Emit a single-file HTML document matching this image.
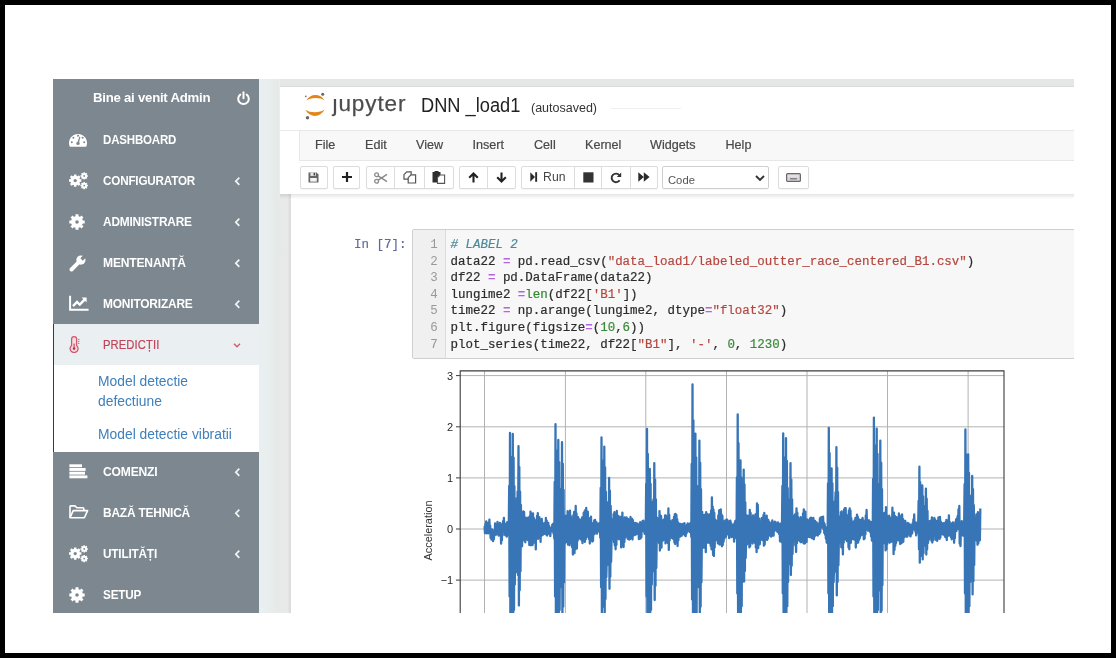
<!DOCTYPE html>
<html>
<head>
<meta charset="utf-8">
<title>Jupyter</title>
<style>
*{box-sizing:border-box;margin:0;padding:0}
html,body{width:1116px;height:658px;overflow:hidden;background:#000}
body{font-family:"Liberation Sans",sans-serif;position:relative}
.abs{position:absolute}
#paper{position:absolute;left:5px;top:5px;width:1106px;height:648px;background:#fff}
#shot{position:absolute;left:53px;top:79px;width:1021px;height:534px;background:#e9edec;overflow:hidden;filter:blur(0.35px)}
/* sidebar */
#side{position:absolute;left:0;top:0;width:206px;height:534px;background:#7c878f}
.mi{position:absolute;left:0;width:206px;height:41px;color:#fff;font-weight:bold;font-size:12.6px;letter-spacing:-0.2px}
.mi .t{position:absolute;left:49.9px;top:1px;transform-origin:0 50%;line-height:41px;white-space:nowrap}
.mi svg.ic{position:absolute}
.mi .chev{position:absolute;left:181px;top:15.5px}
#pred{position:absolute;left:0;top:245px;width:206px;height:41px;background:#eaeff1;color:#c0394f}
#sub{position:absolute;left:0;top:286px;width:206px;height:87px;background:#fff;color:#3f7fba;font-size:13.85px}
#sub div{position:absolute;left:45px;white-space:nowrap}
#edge{position:absolute;left:0;top:245px;width:1px;height:128px;background:#3a3a3a}
/* jupyter */
#strip{position:absolute;left:226px;top:115px;width:12px;height:419px;background:linear-gradient(90deg,#e7eae9,#e8e9e9 70%,#dedede 88%,#dcdcdc);}
#gap{position:absolute;left:206px;top:0;width:20px;height:534px;background:linear-gradient(90deg,#eaeff1,#e8edee 45%,#e5eae8)}
#nb{position:absolute;left:238px;top:115px;width:783px;height:419px;background:#fff}
#hdr{position:absolute;left:227px;top:7px;width:794px;height:108.3px;background:#fff}
#band{position:absolute;left:227px;top:0;width:794px;height:8px;background:#e5e7e6;border-bottom:1.3px solid #dadcdb;z-index:3}
#shadow{position:absolute;left:227px;top:115.3px;width:794px;height:5px;background:linear-gradient(rgba(0,0,0,0.10),rgba(0,0,0,0))}
#menubar{position:absolute;left:19px;top:44px;width:775px;height:31px;background:#f8f8f8;border:1px solid #e7e7e7;border-right:none}
.menu{position:absolute;top:0;line-height:28px;font-size:12.6px;color:#484848;-webkit-text-stroke:0.2px #484848}
.btn{position:absolute;top:79.5px;height:23px;background:#fff;border:1px solid #dcdcdc;border-radius:2px;box-shadow:0 1px 1px rgba(0,0,0,0.04)}
.btn i{position:absolute;top:0;width:1px;height:100%;background:#dcdcdc}
.btn svg{position:absolute}
/* cell */
#prompt{position:absolute;font-family:"Liberation Mono",monospace;font-size:12.47px;color:#5c6aa0;white-space:pre;-webkit-text-stroke:0.15px #5c6aa0}
#cell{position:absolute;left:359px;top:150px;width:663px;height:130px;background:#f7f7f7;border:1px solid #cfcfcf;border-radius:2px}
#gut{position:absolute;left:0;top:0;width:33px;height:128px;background:#f0f0f0;border-right:1px solid #dcdcdc}
.ln{position:absolute;left:0;width:24.8px;text-align:right;font-family:"Liberation Mono",monospace;font-size:12.47px;color:#999;line-height:16.63px}
.cl{position:absolute;left:37.5px;font-family:"Liberation Mono",monospace;font-size:12.47px;color:#2c2c2c;line-height:16.63px;white-space:pre;-webkit-text-stroke:0.2px}
.cm{color:#4b8a99;font-style:italic}
.op{color:#b266dd;font-weight:bold;-webkit-text-stroke:0}
.st{color:#b5473f}
.nu{color:#3a8a3a}
.bi{color:#2e8b2e}
</style>
</head>
<body>
<div id="paper"></div>
<div id="shot">
  <div id="strip"></div>
  <div id="gap"></div>
  <div id="nb"></div>
  <div id="band"></div>
  <div id="shadow"></div>

  <!-- chart -->
  <svg class="abs" style="left:340px;top:285px" width="640" height="249" viewBox="393 364 640 249">
    <g stroke="#b2b2b2" stroke-width="1" fill="none">
      <path d="M484.5 371V613M565.4 371V613M645.8 371V613M726.5 371V613M807 371V613M887.5 371V613M968.1 371V613"/>
      <path d="M460 375.6H1004M460 426.8H1004M460 477.9H1004M460 529H1004M460 580.1H1004"/>
    </g>
    <polyline fill="none" stroke="#3775b7" stroke-width="2.3" stroke-linejoin="round" points="484.6,526.2 485.0,533.2 485.4,524.1 485.8,532.1 486.2,521.4 486.6,533.3 487.0,522.7 487.4,532.2 487.8,523.0 488.2,533.4 488.6,522.9 489.0,529.9 489.4,519.6 489.8,532.5 490.2,525.6 490.6,537.9 491.0,529.3 491.5,539.7 491.9,529.3 492.3,538.8 492.7,532.2 493.1,541.2 493.5,532.2 493.9,539.2 494.3,529.9 494.7,535.3 495.1,523.5 495.5,532.0 495.9,527.0 496.3,534.6 496.7,525.0 497.1,531.6 497.5,521.8 497.9,533.4 498.3,525.6 498.7,535.7 499.1,525.8 499.5,530.7 499.9,522.8 500.3,535.2 500.7,529.6 501.1,543.6 501.5,532.3 501.9,540.4 502.3,523.6 502.7,535.1 503.1,521.1 503.5,526.2 503.9,517.8 504.3,529.3 504.8,523.3 505.2,535.3 505.6,525.5 506.0,532.9 506.4,528.5 506.8,536.7 507.2,522.2 507.6,534.9 508.0,523.6 508.4,532.7 508.8,523.4 509.2,485.8 509.6,596.5 510.0,432.9 510.4,620.0 510.8,456.9 511.2,618.9 511.6,485.8 512.0,486.2 512.4,589.7 512.8,433.9 513.2,620.0 513.6,457.7 514.0,609.9 514.4,486.2 514.8,584.6 515.2,501.2 515.6,562.7 516.0,509.5 516.4,572.0 516.8,498.1 517.2,570.8 517.6,491.7 518.0,575.0 518.5,446.2 518.9,605.6 519.3,466.9 519.7,590.3 520.1,491.7 520.5,571.2 520.9,504.9 521.3,541.8 521.7,518.7 522.1,546.3 522.5,515.6 522.9,539.2 523.3,511.3 523.7,538.9 524.1,512.0 524.5,540.7 524.9,518.3 525.3,542.3 525.7,517.6 526.1,537.5 526.5,518.7 526.9,538.2 527.3,518.1 527.7,540.1 528.1,517.6 528.5,539.8 528.9,520.9 529.3,545.1 529.7,516.4 530.1,542.5 530.5,511.6 530.9,545.3 531.3,513.3 531.8,539.9 532.2,515.1 532.6,545.0 533.0,513.3 533.4,537.5 533.8,518.0 534.2,542.7 534.6,519.7 535.0,538.9 535.4,522.8 535.8,549.4 536.2,521.4 536.6,538.9 537.0,516.0 537.4,534.2 537.8,513.1 538.2,538.8 538.6,521.5 539.0,536.5 539.4,517.2 539.8,537.8 540.2,520.3 540.6,541.9 541.0,519.5 541.4,535.5 541.8,519.0 542.2,535.3 542.6,522.7 543.0,534.6 543.4,523.9 543.8,533.7 544.2,523.6 544.6,533.8 545.1,522.7 545.5,533.0 545.9,518.0 546.3,534.6 546.7,520.6 547.1,535.5 547.5,523.8 547.9,534.2 548.3,522.8 548.7,533.4 549.1,525.9 549.5,531.7 549.9,528.5 550.3,536.2 550.7,529.7 551.1,531.4 551.5,527.4 551.9,529.7 552.3,524.7 552.7,531.5 553.1,523.8 553.5,533.5 553.9,526.5 554.3,538.6 554.7,481.9 555.1,596.5 555.5,424.2 555.9,620.0 556.3,450.4 556.7,618.9 557.1,481.9 557.5,488.9 557.9,589.7 558.3,440.0 558.8,620.0 559.2,462.2 559.6,609.9 560.0,488.9 560.4,584.6 560.8,574.8 561.2,489.9 561.6,587.3 562.0,442.1 562.4,620.0 562.8,463.8 563.2,606.7 563.6,489.9 564.0,582.4 564.4,515.7 564.8,543.4 565.2,520.3 565.6,540.0 566.0,515.8 566.4,542.0 566.8,518.5 567.2,540.0 567.6,511.2 568.0,544.7 568.4,517.4 568.8,543.7 569.2,512.4 569.6,545.3 570.0,510.7 570.4,542.8 570.8,516.1 571.2,537.2 571.6,518.5 572.1,547.3 572.5,522.6 572.9,554.5 573.3,515.2 573.7,548.9 574.1,512.0 574.5,553.2 574.9,517.5 575.3,549.4 575.7,506.0 576.1,546.6 576.5,513.4 576.9,548.5 577.3,519.5 577.7,540.7 578.1,517.2 578.5,538.8 578.9,523.4 579.3,538.6 579.7,519.4 580.1,536.3 580.5,520.7 580.9,539.3 581.3,520.1 581.7,540.4 582.1,517.4 582.5,543.2 582.9,518.5 583.3,539.7 583.7,512.9 584.1,539.2 584.5,511.4 584.9,541.9 585.4,510.0 585.8,539.3 586.2,507.8 586.6,535.6 587.0,516.1 587.4,533.8 587.8,511.6 588.2,537.3 588.6,519.2 589.0,539.1 589.4,522.2 589.8,543.5 590.2,517.8 590.6,538.1 591.0,516.7 591.4,538.5 591.8,523.3 592.2,541.5 592.6,529.1 593.0,541.0 593.4,522.8 593.8,529.6 594.2,520.3 594.6,534.0 595.0,519.9 595.4,532.1 595.8,521.7 596.2,531.4 596.6,522.3 597.0,533.6 597.4,526.9 597.8,531.4 598.2,524.0 598.6,528.9 599.1,523.4 599.5,531.7 599.9,527.2 600.3,537.8 600.7,487.8 601.1,587.3 601.5,437.5 601.9,620.0 602.3,460.4 602.7,606.7 603.1,487.8 603.5,492.0 603.9,581.4 604.3,446.7 604.7,616.4 605.1,467.3 605.5,598.9 605.9,492.0 606.3,577.1 606.7,559.4 607.1,502.4 607.5,560.9 607.9,502.9 608.3,506.0 608.7,564.9 609.1,477.9 609.5,588.8 609.9,490.7 610.3,576.8 610.7,506.0 611.1,561.9 611.5,541.1 611.9,519.1 612.4,539.2 612.8,521.3 613.2,537.3 613.6,514.1 614.0,542.3 614.4,512.1 614.8,545.4 615.2,515.0 615.6,549.3 616.0,514.3 616.4,544.9 616.8,510.9 617.2,536.0 617.6,517.3 618.0,538.3 618.4,515.9 618.8,539.3 619.2,517.1 619.6,537.7 620.0,519.3 620.4,539.3 620.8,516.8 621.2,547.4 621.6,517.8 622.0,545.2 622.4,512.6 622.8,541.8 623.2,519.0 623.6,547.0 624.0,521.0 624.4,542.1 624.8,517.5 625.2,537.8 625.7,520.2 626.1,536.0 626.5,517.5 626.9,536.1 627.3,518.5 627.7,538.8 628.1,518.8 628.5,539.2 628.9,519.7 629.3,539.7 629.7,521.8 630.1,539.0 630.5,516.9 630.9,536.0 631.3,520.7 631.7,537.6 632.1,518.9 632.5,539.5 632.9,520.1 633.3,535.6 633.7,523.0 634.1,532.6 634.5,524.6 634.9,535.0 635.3,522.9 635.7,534.1 636.1,523.2 636.5,534.3 636.9,524.2 637.3,533.4 637.7,523.7 638.1,532.5 638.5,524.8 638.9,539.1 639.4,524.7 639.8,535.3 640.2,522.2 640.6,538.5 641.0,526.6 641.4,537.2 641.8,523.2 642.2,530.9 642.6,521.0 643.0,530.5 643.4,520.7 643.8,531.5 644.2,522.7 644.6,533.8 645.0,526.1 645.4,533.9 645.8,524.3 646.2,483.9 646.6,596.5 647.0,428.8 647.4,620.0 647.8,453.9 648.2,618.9 648.6,483.9 649.0,502.0 649.4,589.7 649.8,468.9 650.2,620.0 650.6,483.9 651.0,609.9 651.4,502.0 651.8,584.6 652.2,504.3 652.7,559.7 653.1,505.1 653.5,499.3 653.9,571.6 654.3,463.1 654.7,600.0 655.1,479.6 655.5,585.8 655.9,499.3 656.3,568.1 656.7,539.3 657.1,517.7 657.5,540.6 657.9,520.7 658.3,541.2 658.7,520.1 659.1,543.2 659.5,511.1 659.9,550.5 660.3,515.5 660.7,539.4 661.1,515.9 661.5,547.7 661.9,521.7 662.3,538.9 662.7,521.1 663.1,540.5 663.5,519.7 663.9,536.6 664.3,522.1 664.7,539.4 665.1,515.3 665.5,543.4 666.0,515.6 666.4,538.9 666.8,519.7 667.2,542.3 667.6,518.0 668.0,543.2 668.4,508.4 668.8,549.9 669.2,514.9 669.6,540.4 670.0,520.7 670.4,538.0 670.8,523.8 671.2,536.6 671.6,521.7 672.0,537.7 672.4,520.2 672.8,538.7 673.2,522.0 673.6,538.1 674.0,516.9 674.4,542.6 674.8,514.2 675.2,544.0 675.6,514.0 676.0,540.5 676.4,514.9 676.8,542.3 677.2,519.2 677.6,546.0 678.0,522.5 678.4,540.2 678.8,523.4 679.2,535.7 679.7,525.2 680.1,536.6 680.5,524.0 680.9,535.0 681.3,525.4 681.7,535.8 682.1,524.1 682.5,534.1 682.9,523.9 683.3,534.0 683.7,524.6 684.1,533.6 684.5,523.2 684.9,535.5 685.3,529.1 685.7,536.1 686.1,528.3 686.5,533.5 686.9,525.0 687.3,531.6 687.7,523.3 688.1,528.9 688.5,524.0 688.9,530.7 689.3,525.0 689.7,532.0 690.1,523.4 690.5,530.3 690.9,525.5 691.3,537.0 691.7,463.9 692.1,599.5 692.5,384.4 693.0,620.0 693.4,420.5 693.8,620.0 694.2,463.9 694.6,486.0 695.0,592.5 695.4,433.6 695.8,620.0 696.2,457.4 696.6,613.6 697.0,486.0 697.4,587.2 697.8,576.0 698.2,487.2 698.6,489.2 699.0,587.3 699.4,440.6 699.8,620.0 700.2,462.7 700.6,606.7 701.0,489.2 701.4,582.4 701.8,543.5 702.2,512.0 702.6,541.5 703.0,516.8 703.4,547.5 703.8,515.1 704.2,547.6 704.6,515.4 705.0,545.9 705.4,514.3 705.8,552.2 706.2,512.2 706.7,543.2 707.1,514.2 707.5,542.3 707.9,514.4 708.3,538.6 708.7,518.4 709.1,542.9 709.5,514.5 709.9,541.5 710.3,515.4 710.7,545.9 711.1,510.5 711.5,549.3 711.9,497.3 712.3,544.2 712.7,506.6 713.1,555.1 713.5,509.7 713.9,556.1 714.3,512.9 714.7,547.6 715.1,519.3 715.5,537.8 715.9,520.3 716.3,540.0 716.7,521.7 717.1,538.0 717.5,522.1 717.9,543.4 718.3,515.4 718.7,542.1 719.1,510.3 719.5,544.6 720.0,510.0 720.4,542.0 720.8,509.5 721.2,544.4 721.6,514.4 722.0,546.3 722.4,516.0 722.8,545.1 723.2,522.3 723.6,541.8 724.0,522.9 724.4,538.6 724.8,520.6 725.2,536.6 725.6,523.8 726.0,536.8 726.4,519.6 726.8,534.5 727.2,519.6 727.6,534.3 728.0,522.7 728.4,534.7 728.8,521.8 729.2,538.2 729.6,520.9 730.0,527.5 730.4,520.7 730.8,529.2 731.2,523.2 731.6,537.1 732.0,529.9 732.4,534.7 732.8,524.8 733.3,536.4 733.7,532.3 734.1,541.7 734.5,523.1 734.9,536.3 735.3,520.8 735.7,535.9 736.1,524.9 736.5,538.4 736.9,477.5 737.3,593.4 737.7,414.5 738.1,620.0 738.5,443.2 738.9,614.8 739.3,477.5 739.7,498.1 740.1,586.9 740.5,460.3 740.9,620.0 741.3,477.5 741.7,606.3 742.1,498.1 742.5,582.1 742.9,502.3 743.3,560.6 743.7,469.7 744.1,581.6 744.5,484.5 744.9,571.1 745.3,502.3 745.7,557.9 746.1,540.7 746.5,515.2 747.0,544.4 747.4,517.4 747.8,539.2 748.2,516.0 748.6,540.4 749.0,517.8 749.4,547.4 749.8,509.9 750.2,546.3 750.6,513.0 751.0,539.8 751.4,519.0 751.8,541.0 752.2,518.5 752.6,543.6 753.0,515.3 753.4,538.9 753.8,518.8 754.2,541.0 754.6,518.8 755.0,543.1 755.4,514.3 755.8,547.4 756.2,513.8 756.6,552.2 757.0,503.5 757.4,548.5 757.8,505.0 758.2,548.2 758.6,519.5 759.0,541.7 759.4,518.7 759.8,544.3 760.3,521.9 760.7,538.4 761.1,521.3 761.5,539.5 761.9,517.8 762.3,540.2 762.7,517.9 763.1,536.7 763.5,514.9 763.9,545.7 764.3,513.0 764.7,544.5 765.1,518.3 765.5,539.0 765.9,517.6 766.3,539.6 766.7,515.6 767.1,539.9 767.5,522.3 767.9,538.7 768.3,520.0 768.7,534.0 769.1,521.9 769.5,535.4 769.9,524.7 770.3,535.8 770.7,524.3 771.1,536.6 771.5,522.4 771.9,533.5 772.3,520.5 772.7,535.5 773.1,522.7 773.6,535.6 774.0,522.7 774.4,530.4 774.8,521.6 775.2,527.2 775.6,522.2 776.0,530.5 776.4,523.6 776.8,530.3 777.2,526.2 777.6,532.2 778.0,522.3 778.4,530.8 778.8,523.8 779.2,534.2 779.6,525.5 780.0,541.3 780.4,523.7 780.8,540.9 781.2,531.9 781.6,542.2 782.0,522.2 782.4,486.0 782.8,593.4 783.2,433.4 783.6,620.0 784.0,457.3 784.4,614.8 784.8,486.0 785.2,488.1 785.6,586.9 786.0,438.2 786.4,620.0 786.9,460.9 787.3,606.3 787.7,488.1 788.1,582.1 788.5,501.0 788.9,563.8 789.3,499.6 789.7,499.3 790.1,556.6 790.5,463.1 790.9,575.0 791.3,479.6 791.7,565.8 792.1,499.3 792.5,554.3 792.9,540.4 793.3,518.2 793.7,540.5 794.1,515.8 794.5,538.6 794.9,514.4 795.3,545.4 795.7,518.4 796.1,552.0 796.5,508.3 796.9,543.2 797.3,512.6 797.7,537.5 798.1,517.1 798.5,539.7 798.9,519.2 799.3,540.8 799.7,522.6 800.1,541.6 800.6,517.1 801.0,542.3 801.4,520.9 801.8,541.1 802.2,519.8 802.6,539.0 803.0,513.4 803.4,543.0 803.8,509.4 804.2,543.7 804.6,513.9 805.0,543.3 805.4,511.6 805.8,539.7 806.2,520.3 806.6,541.9 807.0,519.5 807.4,536.7 807.8,521.3 808.2,536.8 808.6,524.2 809.0,536.4 809.4,519.5 809.8,537.1 810.2,518.2 810.6,536.3 811.0,517.7 811.4,537.7 811.8,519.3 812.2,538.4 812.6,518.2 813.0,535.4 813.4,518.0 813.9,539.3 814.3,522.4 814.7,536.5 815.1,521.0 815.5,533.9 815.9,523.9 816.3,534.8 816.7,522.4 817.1,535.3 817.5,524.3 817.9,535.5 818.3,524.4 818.7,534.0 819.1,523.3 819.5,533.8 819.9,518.3 820.3,532.3 820.7,517.3 821.1,524.4 821.5,517.1 821.9,527.3 822.3,520.9 822.7,526.6 823.1,516.7 823.5,529.3 823.9,522.6 824.3,533.0 824.7,524.2 825.1,534.7 825.5,527.1 825.9,538.6 826.3,529.9 826.7,542.6 827.2,528.1 827.6,538.5 828.0,483.5 828.4,593.4 828.8,427.8 829.2,620.0 829.6,453.1 830.0,614.8 830.4,483.5 830.8,501.7 831.2,586.9 831.6,468.3 832.0,620.0 832.4,483.5 832.8,606.3 833.2,501.7 833.6,582.1 834.0,568.9 834.4,503.5 834.8,571.6 835.2,503.8 835.6,492.2 836.0,568.9 836.4,447.2 836.8,595.4 837.2,467.7 837.6,582.1 838.0,492.2 838.4,565.5 838.8,543.4 839.2,518.2 839.6,542.2 840.0,516.3 840.4,539.4 840.9,512.1 841.3,547.3 841.7,511.5 842.1,544.2 842.5,516.7 842.9,554.4 843.3,517.3 843.7,542.7 844.1,509.4 844.5,539.7 844.9,508.1 845.3,535.8 845.7,508.2 846.1,539.4 846.5,514.6 846.9,541.2 847.3,519.8 847.7,541.5 848.1,518.9 848.5,547.5 848.9,510.6 849.3,549.3 849.7,508.5 850.1,541.7 850.5,510.7 850.9,542.8 851.3,518.2 851.7,537.2 852.1,521.3 852.5,539.0 852.9,522.4 853.3,536.7 853.7,521.6 854.2,539.7 854.6,520.4 855.0,539.1 855.4,517.9 855.8,547.5 856.2,519.8 856.6,542.7 857.0,514.6 857.4,542.8 857.8,516.6 858.2,542.5 858.6,519.0 859.0,540.1 859.4,521.6 859.8,538.3 860.2,520.2 860.6,533.6 861.0,523.8 861.4,535.3 861.8,519.5 862.2,532.9 862.6,518.0 863.0,534.0 863.4,520.5 863.8,539.3 864.2,524.7 864.6,538.7 865.0,523.2 865.4,534.6 865.8,515.4 866.2,522.1 866.6,510.0 867.0,526.9 867.5,519.8 867.9,530.7 868.3,522.0 868.7,529.4 869.1,520.4 869.5,531.0 869.9,522.8 870.3,532.4 870.7,521.8 871.1,536.4 871.5,527.7 871.9,540.6 872.3,528.8 872.7,537.8 873.1,478.9 873.5,596.5 873.9,417.6 874.3,620.0 874.7,445.5 875.1,618.9 875.5,478.9 875.9,483.9 876.3,589.7 876.7,428.7 877.1,620.0 877.5,453.8 877.9,609.9 878.3,483.9 878.7,584.6 879.1,574.7 879.5,489.2 879.9,590.3 880.3,440.6 880.7,620.0 881.2,462.7 881.6,610.8 882.0,489.2 882.4,585.2 882.8,519.8 883.2,540.3 883.6,518.8 884.0,540.5 884.4,512.8 884.8,543.5 885.2,517.2 885.6,550.4 886.0,507.1 886.4,549.2 886.8,515.4 887.2,544.3 887.6,517.0 888.0,540.9 888.4,520.6 888.8,538.7 889.2,515.6 889.6,542.8 890.0,518.4 890.4,535.4 890.8,517.9 891.2,541.8 891.6,517.4 892.0,538.0 892.4,507.7 892.8,541.6 893.2,515.8 893.6,554.2 894.0,512.7 894.5,549.9 894.9,516.0 895.3,545.9 895.7,519.8 896.1,542.9 896.5,517.1 896.9,536.9 897.3,518.8 897.7,540.0 898.1,520.4 898.5,540.3 898.9,513.5 899.3,535.7 899.7,516.7 900.1,544.1 900.5,519.3 900.9,543.4 901.3,515.4 901.7,543.1 902.1,514.4 902.5,540.1 902.9,518.8 903.3,541.8 903.7,520.3 904.1,537.4 904.5,522.1 904.9,536.5 905.3,521.0 905.7,534.2 906.1,523.5 906.5,536.6 906.9,525.2 907.3,536.7 907.8,522.9 908.2,533.4 908.6,523.3 909.0,534.3 909.4,524.8 909.8,535.8 910.2,524.6 910.6,536.4 911.0,528.1 911.4,534.3 911.8,526.0 912.2,533.1 912.6,523.3 913.0,529.9 913.4,519.5 913.8,524.6 914.2,514.5 914.6,527.3 915.0,522.4 915.4,531.6 915.8,526.3 916.2,535.4 916.6,522.7 917.0,530.9 917.4,525.8 917.8,532.6 918.2,524.7 918.6,500.9 919.0,549.2 919.4,466.7 919.8,562.7 920.2,482.2 920.6,556.0 921.0,500.9 921.5,509.4 921.9,547.2 922.3,485.4 922.7,559.4 923.1,496.3 923.5,553.3 923.9,509.4 924.3,545.7 924.7,505.8 925.1,510.8 925.5,544.3 925.9,488.6 926.3,554.5 926.7,498.7 927.1,549.4 927.5,510.8 927.9,543.1 928.3,540.0 928.7,524.0 929.1,539.5 929.5,521.1 929.9,537.1 930.3,523.2 930.7,534.5 931.1,520.5 931.5,540.9 931.9,517.3 932.3,542.5 932.7,519.7 933.1,540.3 933.5,520.9 933.9,536.3 934.3,518.0 934.8,536.0 935.2,519.4 935.6,539.8 936.0,521.5 936.4,535.2 936.8,521.1 937.2,540.9 937.6,522.3 938.0,538.6 938.4,517.4 938.8,536.5 939.2,517.9 939.6,538.9 940.0,516.9 940.4,537.5 940.8,521.6 941.2,533.6 941.6,523.2 942.0,534.1 942.4,523.4 942.8,534.4 943.2,523.2 943.6,533.3 944.0,525.2 944.4,535.5 944.8,523.2 945.2,536.9 945.6,522.2 946.0,537.5 946.4,519.9 946.8,540.1 947.2,520.4 947.6,536.0 948.1,520.4 948.5,535.6 948.9,515.3 949.3,533.9 949.7,521.9 950.1,535.4 950.5,523.8 950.9,537.1 951.3,524.6 951.7,539.3 952.1,523.2 952.5,533.4 952.9,522.4 953.3,538.5 953.7,527.1 954.1,542.8 954.5,526.3 954.9,538.1 955.3,522.2 955.7,530.9 956.1,519.5 956.5,531.0 956.9,518.5 957.3,528.9 957.7,515.9 958.1,528.8 958.5,509.3 958.9,519.6 959.3,506.0 959.7,543.7 960.1,533.1 960.5,546.1 960.9,527.2 961.3,534.7 961.8,521.1 962.2,531.4 962.6,524.3 963.0,535.6 963.4,525.0 963.8,535.0 964.2,521.0 964.6,484.2 965.0,593.4 965.4,429.4 965.8,620.0 966.2,454.3 966.6,614.8 967.0,484.2 967.4,495.4 967.8,586.9 968.2,454.3 968.6,620.0 969.0,472.9 969.4,606.3 969.8,495.4 970.2,582.1 970.6,497.7 971.0,574.0 971.4,505.1 971.8,568.2 972.2,475.9 972.6,594.4 973.0,489.1 973.4,581.3 973.8,505.1 974.2,565.0 974.6,520.1 975.1,537.9 975.5,517.7 975.9,538.3 976.3,514.4 976.7,540.7 977.1,519.7 977.5,544.8 977.9,512.2 978.3,543.4 978.7,517.8 979.1,539.1 979.5,513.8 979.9,540.3 980.3,508.6"/>
    <path d="M460.2 613V370.9H1004V613" fill="none" stroke="#3c3c3c" stroke-width="1.1"/>
    <g stroke="#3c3c3c" stroke-width="1">
      <path d="M456 375.6H460M456 426.8H460M456 477.9H460M456 529H460M456 580.1H460"/>
    </g>
    <g font-family="Liberation Sans, sans-serif" font-size="11" fill="#2a2a2a" text-anchor="end">
      <text x="453.2" y="379.5">3</text>
      <text x="453.2" y="430.7">2</text>
      <text x="453.2" y="481.8">1</text>
      <text x="453.2" y="532.9">0</text>
      <text x="453.2" y="584">−1</text>
    </g>
    <text transform="translate(431.6 530.5) rotate(-90)" font-family="Liberation Sans, sans-serif" font-size="10.4" fill="#333" text-anchor="middle" textLength="60" lengthAdjust="spacingAndGlyphs">Acceleration</text>
  </svg>

  <!-- code cell -->
  <div id="prompt" style="left:301px;top:157.6px;line-height:16.63px">In [7]:</div>
  <div id="cell">
    <div id="gut"></div>
    <div class="ln" style="top:6.90px">1</div>
    <div class="ln" style="top:23.53px">2</div>
    <div class="ln" style="top:40.16px">3</div>
    <div class="ln" style="top:56.79px">4</div>
    <div class="ln" style="top:73.42px">5</div>
    <div class="ln" style="top:90.05px">6</div>
    <div class="ln" style="top:106.68px">7</div>
    <div class="cl" style="top:6.90px"><span class="cm"># LABEL 2</span></div>
    <div class="cl" style="top:23.53px">data22 <span class="op">=</span> pd.read_csv(<span class="st">"data_load1/labeled_outter_race_centered_B1.csv"</span>)</div>
    <div class="cl" style="top:40.16px">df22 <span class="op">=</span> pd.DataFrame(data22)</div>
    <div class="cl" style="top:56.79px">lungime2 <span class="op">=</span><span class="bi">len</span>(df22[<span class="st">'B1'</span>])</div>
    <div class="cl" style="top:73.42px">time22 <span class="op">=</span> np.arange(lungime2, dtype<span class="op">=</span><span class="st">"float32"</span>)</div>
    <div class="cl" style="top:90.05px">plt.figure(figsize<span class="op">=</span>(<span class="nu">10</span>,<span class="nu">6</span>))</div>
    <div class="cl" style="top:106.68px">plot_series(time22, df22[<span class="st">"B1"</span>], <span class="st">'-'</span>, <span class="nu">0</span>, <span class="nu">1230</span>)</div>
  </div>

  <!-- header -->
  <div id="hdr">
    <!-- logo -->
    <svg class="abs" style="left:22px;top:4px" width="30" height="32" viewBox="302 90 30 32">
      <path d="M306.2 100.6C310 93.2 320.6 93.2 324.5 100.4C320 97.2 310.6 97.2 306.2 100.6Z" fill="#e0871c"/>
      <path d="M305.4 109.8C309.6 118 320.4 118 324.5 109.6C320 113.2 310 113.2 305.4 109.8Z" fill="#e0871c"/>
      <circle cx="322.7" cy="94.2" r="1.5" fill="#66666f"/>
      <circle cx="305.8" cy="96.3" r="0.9" fill="#707078"/>
      <circle cx="307.5" cy="117.7" r="1.7" fill="#66666f"/>
    </svg>
    <div class="abs" id="jup" style="left:52.5px;top:4px;font-size:22.5px;line-height:28px;color:#4c4c4c;-webkit-text-stroke:0.25px #4c4c4c;letter-spacing:0.9px;transform:scaleX(1.0);transform-origin:0 50%;white-space:nowrap">ȷupyter</div>
    <div class="abs" id="nbname" style="left:141px;top:6.8px;font-size:19.5px;line-height:24px;transform:scaleX(0.936);transform-origin:0 50%;color:#222;white-space:nowrap">DNN _load1</div>
    <div class="abs" id="autos" style="left:251px;top:13.8px;font-size:12.5px;line-height:16px;color:#333;white-space:nowrap">(autosaved)</div>
    <div class="abs" style="left:331px;top:21.5px;width:70px;height:1px;background:#f0f0f0"></div>
    <div class="abs" style="left:0;top:43.5px;width:794px;height:1px;background:#ececec"></div>
    <div id="menubar">
      <div class="menu" style="left:15px">File</div>
      <div class="menu" style="left:65px">Edit</div>
      <div class="menu" style="left:116px">View</div>
      <div class="menu" style="left:172.5px">Insert</div>
      <div class="menu" style="left:234px">Cell</div>
      <div class="menu" style="left:285px">Kernel</div>
      <div class="menu" style="left:350px">Widgets</div>
      <div class="menu" style="left:425.5px">Help</div>
    </div>
    <!-- toolbar -->
    <div class="btn" style="left:20px;width:28px">
      <svg style="left:6.8px;top:5.2px" width="11" height="11" viewBox="0 0 11 11"><path d="M0.5 0.5H8.6L10.5 2.4V10.5H0.5Z" fill="#666"/><rect x="2.4" y="0.5" width="5.4" height="3.4" fill="#e8e8e8"/><rect x="5.6" y="0.9" width="1.4" height="2.5" fill="#444"/><rect x="2.2" y="6" width="6.6" height="3.6" fill="#f4f4f4"/></svg>
    </div>
    <div class="btn" style="left:53px;width:27px">
      <svg style="left:7.6px;top:5.3px" width="10" height="10" viewBox="0 0 10 10"><path d="M3.9 0H6.1V3.9H10V6.1H6.1V10H3.9V6.1H0V3.9H3.9Z" fill="#222"/></svg>
    </div>
    <div class="btn" style="left:86px;width:88px"><i style="left:27.4px"></i><i style="left:56.8px"></i>
      <svg style="left:6.8px;top:5.4px" width="14" height="12" viewBox="0 0 14 12" fill="none" stroke="#8a8a8a" stroke-width="1.3"><circle cx="2.6" cy="2.8" r="1.9"/><circle cx="2.6" cy="9.2" r="1.9"/><path d="M4.2 3.8L13 9.6M4.2 8.2L13 2.4" stroke-width="1.4"/></svg>
      <svg style="left:35.5px;top:4.2px" width="14" height="13" viewBox="0 0 14 13" fill="#fff" stroke="#555" stroke-width="1.2"><path d="M1 3.6L3.8 0.8H8.2V8.2H1Z"/><path d="M5.2 6.6L8 3.8H12.6V12H5.2Z"/></svg>
      <svg style="left:64.8px;top:4.2px" width="14" height="13" viewBox="0 0 14 13"><path d="M0.5 1H8.5V11.5H0.5Z" fill="#2e2e2e"/><rect x="2.5" y="0" width="4" height="2" fill="#2e2e2e"/><path d="M5.5 6.6L8 4H12.6V12.4H5.5Z" fill="#fff" stroke="#555" stroke-width="1.1"/></svg>
    </div>
    <div class="btn" style="left:178.6px;width:57.4px"><i style="left:27.5px"></i>
      <svg style="left:8.5px;top:5.1px" width="11" height="11" viewBox="0 0 11 11" fill="none" stroke="#222" stroke-width="2.1"><path d="M5.5 10.5V1.8M1.2 5.8L5.5 1.5L9.8 5.8"/></svg>
      <svg style="left:36.5px;top:5.1px" width="11" height="11" viewBox="0 0 11 11" fill="none" stroke="#222" stroke-width="2.1"><path d="M5.5 0.5V9.2M1.2 5.2L5.5 9.5L9.8 5.2"/></svg>
    </div>
    <div class="btn" style="left:240.6px;width:137.4px"><i style="left:52px"></i><i style="left:79.5px"></i><i style="left:108px"></i>
      <svg style="left:8px;top:5.8px" width="9" height="10" viewBox="0 0 9 10"><path d="M0.3 0.3L5 5L0.3 9.7Z" fill="#2a2a2a"/><rect x="5.2" y="0.2" width="1.9" height="9.6" fill="#2a2a2a"/></svg>
      <div class="abs" style="left:21.5px;top:0.6px;line-height:20.5px;font-size:12.2px;color:#444">Run</div>
      <svg style="left:61px;top:5.2px" width="11" height="11" viewBox="0 0 11 11"><rect x="0.3" y="0.3" width="10.2" height="10.2" fill="#333"/></svg>
      <svg style="left:88px;top:5.2px" width="12" height="12" viewBox="0 0 12 12" fill="none"><path d="M9.6 8.2A4.3 4.3 0 1 1 9.3 3.2" stroke="#333" stroke-width="1.9"/><path d="M11.2 0.6V5H6.8Z" fill="#333"/></svg>
      <svg style="left:116.5px;top:5.8px" width="12" height="10" viewBox="0 0 12 10"><path d="M0.3 0.2L5.8 5L0.3 9.8ZM5.8 0.2L11.6 5L5.8 9.8Z" fill="#2a2a2a"/></svg>
    </div>
    <div class="btn" style="left:382px;width:107px;border-color:#cfcfcf">
      <div class="abs" style="left:5.2px;top:3.4px;line-height:20.5px;font-size:11.6px;color:#555;transform:scaleX(0.97);transform-origin:0 50%">Code</div>
      <svg style="left:91.6px;top:8.2px" width="10" height="7" viewBox="0 0 10 7" fill="none" stroke="#333" stroke-width="1.9"><path d="M1 1L5 5L9 1"/></svg>
    </div>
    <div class="btn" style="left:498px;width:31px">
      <svg style="left:7px;top:6.8px" width="15" height="9" viewBox="0 0 15 9"><rect x="0.6" y="0.6" width="13.8" height="7.8" rx="1" fill="#d8d4d8" stroke="#6e686e" stroke-width="1.2"/><path d="M2.5 3H12.5" stroke="#fff" stroke-width="1.2" stroke-dasharray="1.2 0.8"/><path d="M4 5.8H11" stroke="#7a747a" stroke-width="1.3"/></svg>
    </div>
  </div>

  <!-- sidebar -->
  <div id="side"></div>
  <div id="pred"></div>
  <div id="sub">
    <div style="top:6px;line-height:20px">Model detectie<br>defectiune</div>
    <div style="top:59px;line-height:20px">Model detectie vibratii</div>
  </div>
  <div id="edge"></div>

  <div class="mi" style="top:-2px"><div class="t" style="left:39.8px;top:0;font-size:13px;letter-spacing:-0.25px;transform:scaleX(1.016)">Bine ai venit Admin</div>
    <svg class="ic" style="left:183px;top:14px" width="15" height="15" viewBox="0 0 15 15" fill="none" stroke="#fff" stroke-width="2" stroke-linecap="round"><path d="M4.3 3.6A5.3 5.3 0 1 0 10.7 3.6"/><path d="M7.5 1.2V7.2"/></svg>
  </div>

  <div class="mi" style="top:40px"><div class="t" style="transform:scaleX(0.915)">DASHBOARD</div>
    <svg class="ic" style="left:16px;top:14px" width="18" height="14" viewBox="0 0 18 14"><path d="M0.6 13.2A9 9 0 1 1 17.4 13.2Q17.2 13.8 16.5 13.8H1.5Q0.8 13.8 0.6 13.2Z" fill="#fff"/><g fill="#7c878f"><circle cx="9" cy="2.8" r="1"/><circle cx="4.4" cy="4.8" r="1"/><circle cx="13.6" cy="4.8" r="1"/><circle cx="2.8" cy="9.2" r="1"/><circle cx="15.2" cy="9.2" r="1"/><circle cx="9" cy="10.4" r="1.7"/><path d="M8.3 10L10.4 3.6L11.4 3.9L9.8 10.6Z"/></g></svg>
  </div>
  <div class="mi" style="top:81px"><div class="t" style="transform:scaleX(0.927)">CONFIGURATOR</div>
    <svg class="ic" style="left:16px;top:12px" width="20" height="18" viewBox="0 0 20 18"><use href="#cogs"/></svg>
    <svg class="chev" width="7" height="10" viewBox="0 0 7 10" fill="none" stroke="#f1f3f4" stroke-width="1.7"><path d="M5.3 1.6L1.8 5.2L5.3 8.8"/></svg>
  </div>
  <div class="mi" style="top:122px"><div class="t" style="transform:scaleX(0.943)">ADMINISTRARE</div>
    <svg class="ic" style="left:16px;top:13px" width="16" height="16" viewBox="0 0 16 16"><use href="#gear"/></svg>
    <svg class="chev" width="7" height="10" viewBox="0 0 7 10" fill="none" stroke="#f1f3f4" stroke-width="1.7"><path d="M5.3 1.6L1.8 5.2L5.3 8.8"/></svg>
  </div>
  <div class="mi" style="top:163px"><div class="t" style="transform:scaleX(0.96)">MENTENANȚĂ</div>
    <svg class="ic" style="left:16px;top:13px" width="17" height="17" viewBox="0 0 17 17"><path d="M2.5 14.5L9.6 7.4" stroke="#fff" stroke-width="3.9" stroke-linecap="round" fill="none"/><circle cx="11.9" cy="5.1" r="4.6" fill="#fff"/><path d="M12.6 4.4L18 -1" stroke="#7c878f" stroke-width="3.5" fill="none"/></svg>
    <svg class="chev" width="7" height="10" viewBox="0 0 7 10" fill="none" stroke="#f1f3f4" stroke-width="1.7"><path d="M5.3 1.6L1.8 5.2L5.3 8.8"/></svg>
  </div>
  <div class="mi" style="top:204px"><div class="t" style="transform:scaleX(0.947)">MONITORIZARE</div>
    <svg class="ic" style="left:16px;top:12px" width="20" height="16" viewBox="0 0 20 16" fill="none" stroke="#fff"><path d="M1.1 0.8V14.8H19.6" stroke-width="2"/><path d="M4 11.2L8 7L10.8 9.6L16 4.2" stroke-width="2.4"/><path d="M12.6 2.6H17.6V7.6Z" fill="#fff" stroke="none"/></svg>
    <svg class="chev" width="7" height="10" viewBox="0 0 7 10" fill="none" stroke="#f1f3f4" stroke-width="1.7"><path d="M5.3 1.6L1.8 5.2L5.3 8.8"/></svg>
  </div>
  <div class="mi" style="top:245px;color:#c2455b;font-weight:normal"><div class="t" style="letter-spacing:0.1px;-webkit-text-stroke:0.2px #c2455b;transform:scaleX(0.892)">PREDICȚII</div>
    <svg class="ic" style="left:16px;top:11.6px" width="12" height="17" viewBox="0 0 12 17" fill="none" stroke="#cc5a6e"><path d="M2.6 3.2A2.5 2.5 0 0 1 7.6 3.2V9.4A4 4 0 1 1 2.6 9.4Z" stroke-width="1.25" fill="#f5dadf"/><circle cx="5.1" cy="12.6" r="1.3" fill="#b8354a" stroke="none"/><path d="M5.1 12.4V7.6" stroke="#b8354a" stroke-width="1"/><path d="M8.9 3.4H10.4M8.9 5.4H10.4M8.9 7.4H10.4" stroke-width="0.9"/></svg>
    <svg class="chev" style="left:178.5px;top:18px" width="10" height="7" viewBox="0 0 10 7" fill="none" stroke="#cf5a70" stroke-width="1.35"><path d="M2 1.8L5 4.8L8 1.8"/></svg>
  </div>
  <div class="mi" style="top:372px"><div class="t" style="transform:scaleX(0.96)">COMENZI</div>
    <svg class="ic" style="left:16px;top:13px" width="19" height="15" viewBox="0 0 19 15" fill="#fff"><rect x="0.4" y="0.3" width="12.6" height="2.9"/><rect x="0.4" y="4" width="16.2" height="2.9"/><rect x="0.4" y="7.7" width="15.6" height="2.9"/><rect x="0.4" y="11.4" width="18" height="2.9"/></svg>
    <svg class="chev" width="7" height="10" viewBox="0 0 7 10" fill="none" stroke="#f1f3f4" stroke-width="1.7"><path d="M5.3 1.6L1.8 5.2L5.3 8.8"/></svg>
  </div>
  <div class="mi" style="top:413px"><div class="t" style="transform:scaleX(0.945)">BAZĂ TEHNICĂ</div>
    <svg class="ic" style="left:16px;top:13px" width="20" height="14" viewBox="0 0 20 14" fill="none" stroke="#fff" stroke-width="1.6" stroke-linejoin="round"><path d="M1 12.6V1.6Q1 0.9 1.7 0.9H6L7.8 2.8H14Q14.8 2.8 14.8 3.6V5.4"/><path d="M1 12.8L4.2 5.6H18.6L15.4 12.8Z"/></svg>
    <svg class="chev" width="7" height="10" viewBox="0 0 7 10" fill="none" stroke="#f1f3f4" stroke-width="1.7"><path d="M5.3 1.6L1.8 5.2L5.3 8.8"/></svg>
  </div>
  <div class="mi" style="top:454px"><div class="t" style="transform:scaleX(0.936)">UTILITĂȚI</div>
    <svg class="ic" style="left:16px;top:12px" width="20" height="18" viewBox="0 0 20 18"><use href="#cogs"/></svg>
    <svg class="chev" width="7" height="10" viewBox="0 0 7 10" fill="none" stroke="#f1f3f4" stroke-width="1.7"><path d="M5.3 1.6L1.8 5.2L5.3 8.8"/></svg>
  </div>
  <div class="mi" style="top:495px"><div class="t" style="transform:scaleX(0.93)">SETUP</div>
    <svg class="ic" style="left:16px;top:13px" width="16" height="16" viewBox="0 0 16 16"><use href="#gear"/></svg>
  </div>
</div>

<svg width="0" height="0" style="position:absolute">
  <defs>
    <g id="gear">
      <circle cx="8" cy="8" r="3.9" fill="none" stroke="#fff" stroke-width="4.2"/>
      <g stroke="#fff" stroke-width="3" stroke-linecap="butt">
        <path d="M8 0.3V3M8 13V15.7M0.3 8H3M13 8H15.7"/>
        <path d="M2.55 2.55L4.5 4.5M11.5 11.5L13.45 13.45M2.55 13.45L4.5 11.5M11.5 4.5L13.45 2.55"/>
      </g>
    </g>
    <g id="cogs">
      <circle cx="6.2" cy="8.6" r="3.3" fill="none" stroke="#fff" stroke-width="3.2"/>
      <g stroke="#fff" stroke-width="2.5">
        <path d="M6.2 2.4V4.6M6.2 12.6V14.8M0 8.6H2.2M10.2 8.6H12.4"/>
        <path d="M1.8 4.2L3.4 5.8M9 11.4L10.6 13M1.8 13L3.4 11.4M9 5.8L10.6 4.2"/>
      </g>
      <circle cx="15.2" cy="3.9" r="1.9" fill="none" stroke="#fff" stroke-width="2"/>
      <g stroke="#fff" stroke-width="1.5">
        <path d="M15.2 0.2V1.6M15.2 6.2V7.6M11.5 3.9H12.9M17.5 3.9H18.9M12.6 1.3L13.6 2.3M16.8 5.5L17.8 6.5M12.6 6.5L13.6 5.5M16.8 2.3L17.8 1.3"/>
      </g>
      <circle cx="15.2" cy="13.6" r="1.9" fill="none" stroke="#fff" stroke-width="2"/>
      <g stroke="#fff" stroke-width="1.5">
        <path d="M15.2 9.9V11.3M15.2 15.9V17.3M11.5 13.6H12.9M17.5 13.6H18.9M12.6 11L13.6 12M16.8 15.2L17.8 16.2M12.6 16.2L13.6 15.2M16.8 12L17.8 11"/>
      </g>
    </g>
  </defs>
</svg>
</body>
</html>
